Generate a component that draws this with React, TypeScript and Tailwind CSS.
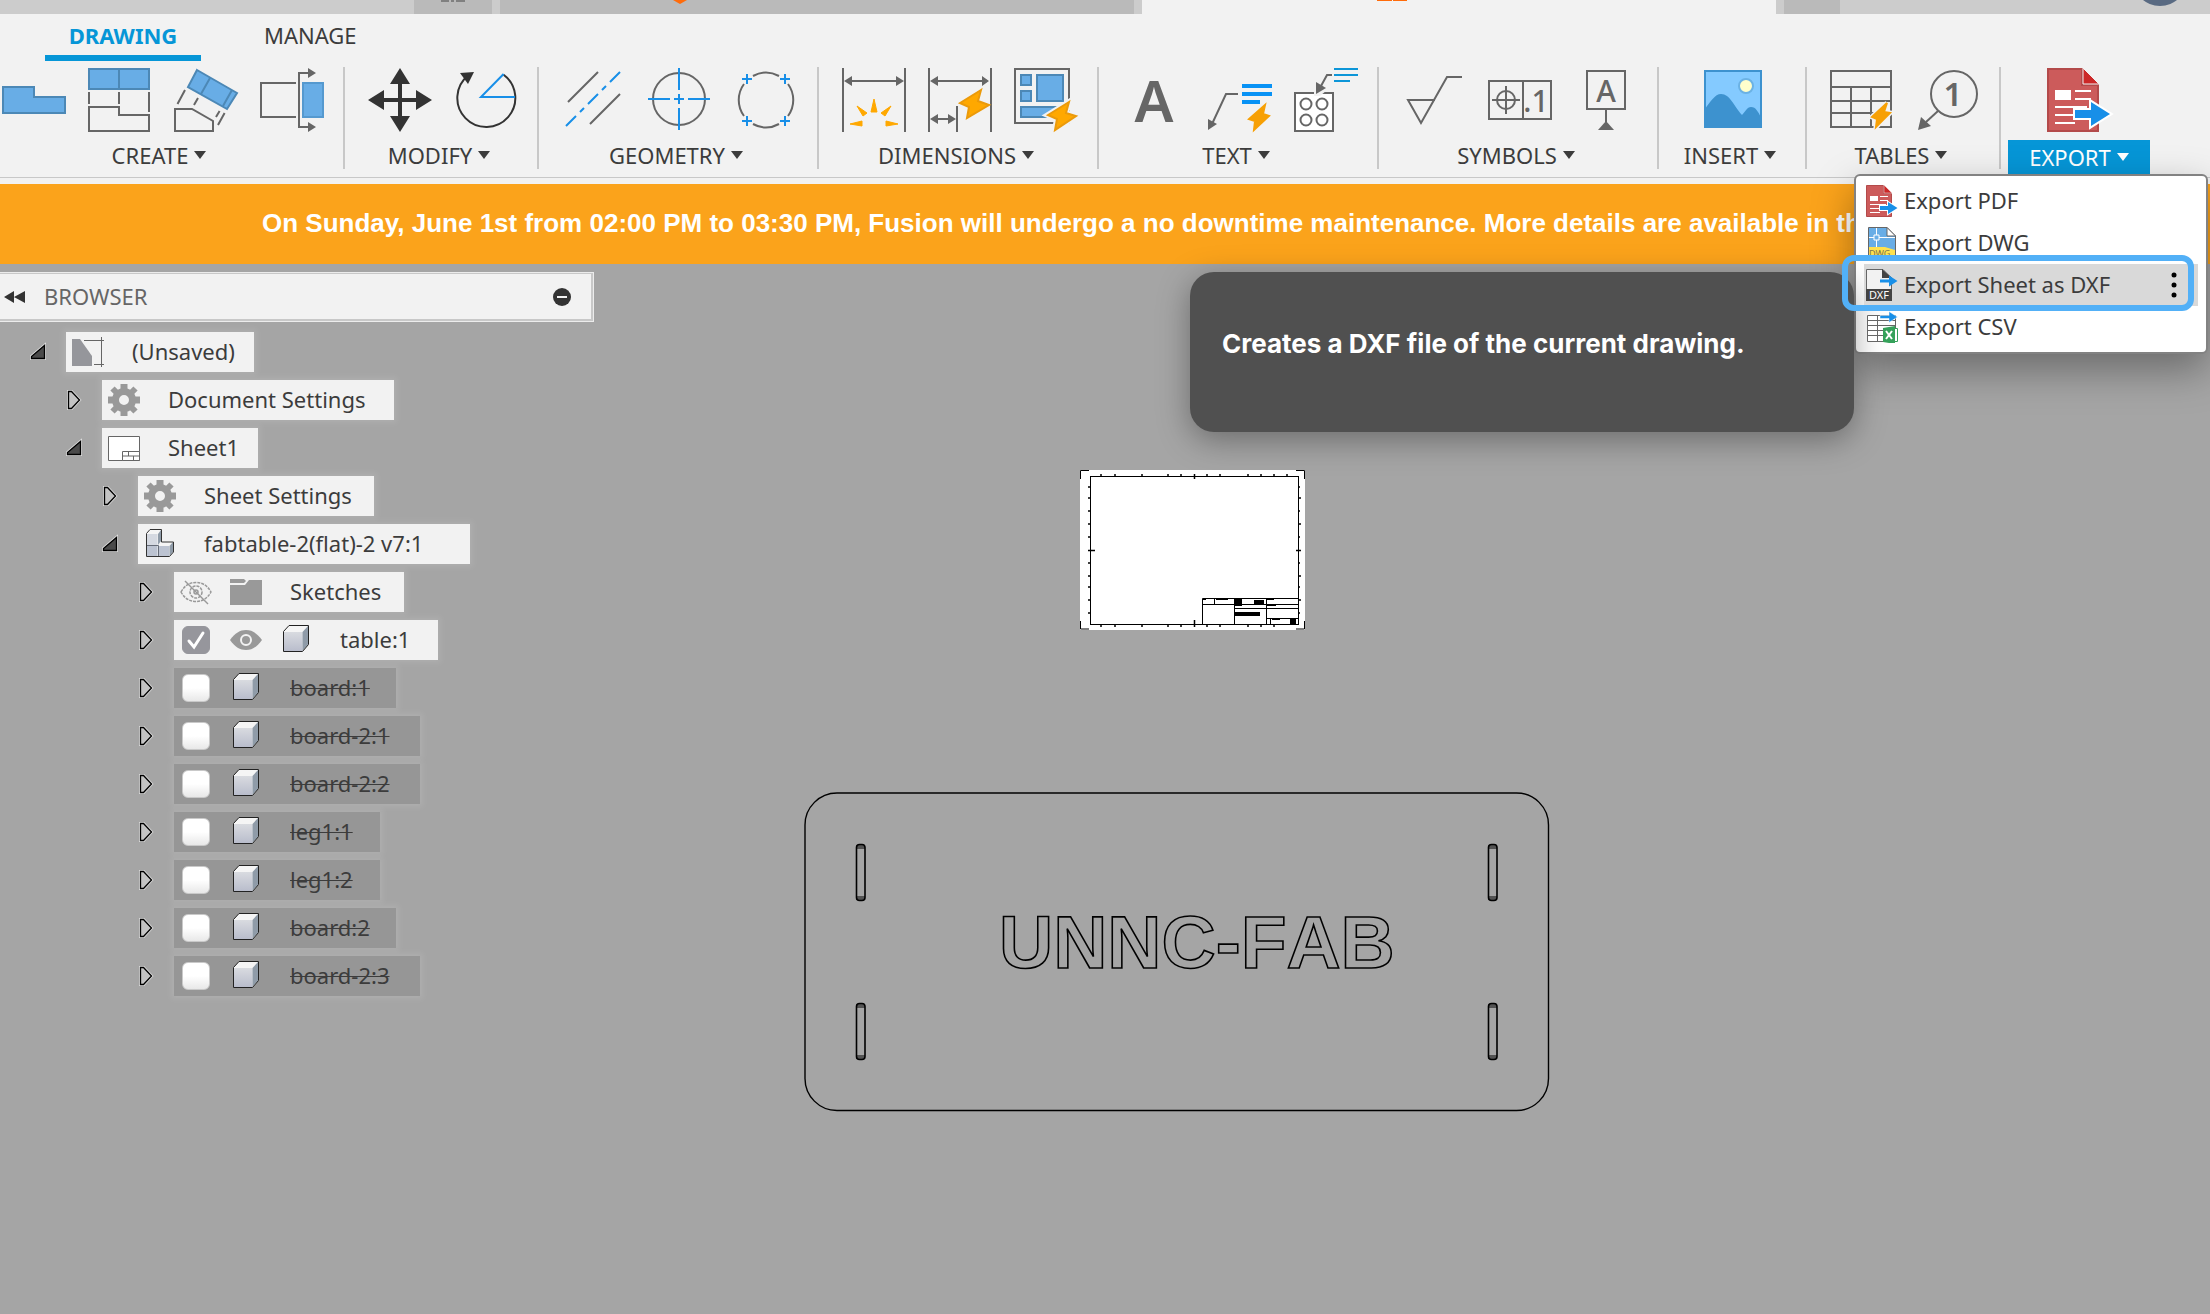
import React, { useState } from 'react';

const SANS = "font-['Noto_Sans','Open_Sans',sans-serif]";

interface IconProps {
  className?: string;
}

/* ---------- Toolbar icons, all drawn on a 64px grid ---------- */

const Glyph: React.FC<{ children: React.ReactNode; className?: string }> = ({ children, className }) => (
  <svg
    viewBox="0 0 64 64"
    className={className ?? 'w-16 h-16 block overflow-visible'}
    fill="none"
    stroke="#666666"
    strokeWidth="2"
    aria-hidden="true"
  >
    {children}
  </svg>
);

const BaseViewIcon = () => (
  <Glyph>
    <path d="M1 19H32V29H63V45H1Z" fill="#68ade6" stroke="#4c88b6" />
  </Glyph>
);

const ProjectedViewIcon = () => (
  <Glyph>
    <path d="M1 1H61V21H1ZM31 1V21" fill="#68ade6" stroke="#4c88b6" />
    <path d="M1 24V36M31 24V36M61 24V44M1 39H31V47H61V63H1Z" />
  </Glyph>
);

const AuxiliaryViewIcon = () => (
  <Glyph>
    <path d="M23 2L63 25L53 41L14 19Z" fill="#68ade6" stroke="#4c88b6" />
    <path d="M36 10L27 26M58 22L49 38" stroke="#4c88b6" />
    <path d="M11 22L3.500 36M24 30L20 37M45.600 43L42 49M50.600 45L44 57M1 41H18L39 53V63H1Z" />
  </Glyph>
);

const SectionViewIcon = () => (
  <Glyph>
    <path d="M36 15H1V49H36M48 5H39V59H48" />
    <path d="M48 0L56 5L48 10ZM48 54L56 59L48 64Z" fill="#666666" stroke="none" />
    <rect x="43" y="15" width="20" height="34" fill="#68ade6" stroke="#5599cf" />
  </Glyph>
);

const MoveIcon = () => (
  <Glyph>
    <path d="M32 10V54M10 32H54" stroke="#333333" strokeWidth="4" />
    <path
      d="M32 0L42 16H22ZM32 64L42 48H22ZM0 32L16 22V42ZM64 32L48 22V42Z"
      fill="#333333"
      stroke="none"
    />
  </Glyph>
);

const RotateIcon = () => (
  <Glyph>
    <path d="M14 7.500A29 29 0 1 0 49.600 6.700" stroke="#333333" />
    <path d="M6 5L20 4L14 16Z" fill="#333333" stroke="none" />
    <path d="M49.600 6L27 29H61" stroke="#188fe8" />
  </Glyph>
);

const CenterlineIcon = () => (
  <Glyph>
    <path d="M36 4L6 34M58 26L28 56" />
    <path d="M58 4L48 14M44 18L40 22M36 26L26 36M22 40L18 44M14 48L4 58" stroke="#188fe8" />
  </Glyph>
);

const CenterMarkIcon = () => (
  <Glyph>
    <circle cx="31" cy="31" r="26" />
    <path d="M31 0V22M31 40V62M0 31H22M40 31H62M31 26V36M26 31H36" stroke="#188fe8" />
  </Glyph>
);

const CenterMarkPatternIcon = () => (
  <Glyph>
    <path d="M19 8A27 27 0 0 1 45 8M54 16A27 27 0 0 1 54 48M45 56A27 27 0 0 1 19 56M10 48A27 27 0 0 1 10 16" />
    <path
      d="M13 6V16M8 11H18M51 6V16M46 11H56M13 48V58M8 53H18M51 48V58M46 53H56"
      stroke="#188fe8"
    />
  </Glyph>
);

const DimensionIcon = () => (
  <Glyph>
    <path d="M1 0V64M63 0V64M6 13H58" />
    <path d="M2 13L10 8V18ZM62 13L54 8V18Z" fill="#666666" stroke="none" />
    <path
      d="M32 31L35 44H29ZM15 38L25 45L21 48ZM49 38L39 45L43 48ZM8 56L20 53V58ZM56 56L44 53V58Z"
      fill="#ffa800"
      stroke="#ffa800"
      strokeWidth="1"
    />
  </Glyph>
);

const AutoDimensionIcon = () => (
  <Glyph>
    <path d="M1 0V64M63 0V64M29 38V64M8 13H56M8 51H22" />
    <path d="M2 13L10 8V18ZM61 13L54 8V18ZM2 51L10 46V56ZM28 51L20 46V56Z" fill="#666666" stroke="none" />
    <path d="M53 22L32 35L41 39L39 50L61 37L50 33Z" fill="#ffa800" stroke="#eb9a0a" />
  </Glyph>
);

const DimensionSettingsIcon = () => (
  <Glyph>
    <path d="M1 1H55V55H1Z" />
    <path d="M7 7H17V17H7ZM7 23H17V33H7ZM23 7H49V33H23ZM7 39H45V49H7Z" fill="#68ade6" stroke="#4c88b6" />
    <path d="M55 34L34 47L43 51L41 62L62 48L52 45Z" fill="#f2f2f2" stroke="#f2f2f2" strokeWidth="6" />
    <path d="M55 34L34 47L43 51L41 62L62 48L52 45Z" fill="#ffa800" stroke="#eb9a0a" />
  </Glyph>
);

const TextIcon = () => (
  <Glyph>
    <text x="32" y="54" textAnchor="middle" fontSize="58" fontWeight="600" fill="#666666" stroke="none">
      A
    </text>
  </Glyph>
);

const LeaderIcon = () => (
  <Glyph>
    <path d="M30 26H18L4 56" />
    <path d="M0 51L9 56L0 62Z" fill="#666666" stroke="none" />
    <path d="M34 18H64M34 26H64M34 34H52" stroke="#0892f5" strokeWidth="4" />
    <path d="M57 37L41 51L47 53L46 62L61 48L55 46Z" fill="#f7a005" stroke="#f7a005" />
  </Glyph>
);

const HoleNoteIcon = () => (
  <Glyph>
    <path d="M1 25H39V63H1Z" fill="#ffffff" />
    <circle cx="12" cy="36" r="5.500" />
    <circle cx="28" cy="36" r="5.500" />
    <circle cx="12" cy="52" r="5.500" />
    <circle cx="28" cy="52" r="5.500" />
    <path d="M20 12V28H26L33 22Z" fill="#f2f2f2" stroke="none" />
    <path d="M38 7H33L27 18" />
    <path d="M22 14L32 20L22 26Z" fill="#666666" stroke="none" />
    <path d="M40 1H64M40 7H64M40 13H56" stroke="#0d96d8" />
  </Glyph>
);

const SurfaceTextureIcon = () => (
  <Glyph>
    <path d="M60 9H45L19 55L6 32H33" />
  </Glyph>
);

const FeatureControlIcon = () => (
  <Glyph>
    <path d="M1 13H63V51H1ZM35 13V51M4 32H32M18 18V46" />
    <circle cx="18" cy="32" r="9" />
    <text x="48" y="44" textAnchor="middle" fontSize="30" fontWeight="500" fill="#666666" stroke="none">
      .1
    </text>
  </Glyph>
);

const DatumIcon = () => (
  <Glyph>
    <path d="M13 3H51V41H13ZM32 41V54" />
    <path d="M32 53L40 62H24Z" fill="#666666" stroke="none" />
    <text x="32" y="34" textAnchor="middle" fontSize="30" fontWeight="500" fill="#666666" stroke="none">
      A
    </text>
  </Glyph>
);

const ImageIcon = () => (
  <Glyph>
    <path d="M3 3H59V59H3Z" fill="#84caff" stroke="#3d92cf" />
    <path
      d="M3 41C8 34 13 26 19 26C28 26 32 38 40 47C43 44 45 39 49 39C54 39 56 44 59 49V59H3Z"
      fill="#3d92cf"
      stroke="none"
    />
    <circle cx="44" cy="18" r="7" fill="#ffffcc" stroke="#6bb2e4" />
  </Glyph>
);

const TableIcon = () => (
  <Glyph>
    <path d="M1 3H61V59H1ZM1 19H61M1 33H61M1 45H61M21 19V59M41 19V59" />
    <path d="M57 35L42 49L47 51L46 59L60 45L54 44Z" fill="#f7a005" stroke="#f2f2f2" strokeWidth="5" />
    <path d="M57 35L42 49L47 51L46 59L60 45L54 44Z" fill="#f7a005" stroke="#f7a005" />
  </Glyph>
);

const BalloonIcon = () => (
  <Glyph>
    <circle cx="38" cy="26" r="23" />
    <path d="M22 43L10 54" />
    <path d="M2 62L5 49L15 58Z" fill="#666666" stroke="none" />
    <text x="37" y="38" textAnchor="middle" fontSize="33" fontWeight="600" fill="#666666" stroke="none">
      1
    </text>
  </Glyph>
);

const PdfIcon: React.FC<IconProps> = ({ className }) => (
  <Glyph className={className}>
    <path d="M1 1H35V17H51V63H1Z" fill="#cc5b5b" stroke="#b34a4a" />
    <path d="M36 0L52 16H36Z" fill="#cc2828" stroke="#f2f2f2" strokeWidth="1" />
    <path d="M8 22H24V32H8Z" fill="#ffffff" stroke="none" />
    <path d="M28 23H44M28 31H44M8 39H40M8 47H28M8 55H28" stroke="#ffffff" />
    <path d="M28 42H44V34L63 46L44 58V50H28Z" fill="#188fe8" stroke="#ffffff" strokeWidth="4" />
    <path d="M28 42H44V34L63 46L44 58V50H28Z" fill="#188fe8" stroke="none" />
  </Glyph>
);

/* ---------- Menu icons, 32px grid ---------- */

const DwgIcon = () => (
  <svg viewBox="0 0 32 32" className="w-8 h-8" aria-hidden="true">
    <path d="M2.500.500H21L29.500 9V31.500H2.500Z" fill="#68ade6" stroke="#666666" />
    <path d="M21 .500V9H29.500Z" fill="#ffffff" stroke="#666666" />
    <path d="M3 20H19L29 23V31H3Z" fill="#ffe14d" />
    <path d="M10.500 1V8M10.500 13V20M3 10.500H8M13 10.500H29M8 8H13V13H8Z" fill="none" stroke="#ffffff" />
    <text x="3" y="30" fontSize="9" fill="#7a7350">
      DWG
    </text>
  </svg>
);

const DxfIcon = () => (
  <svg viewBox="0 0 32 32" className="w-8 h-8" aria-hidden="true">
    <path d="M.500.500H17L25.500 9V31.500H.500Z" fill="#f2f2f2" stroke="#666666" />
    <path d="M16 0L26 9H16Z" fill="#434343" />
    <path d="M14 10.500H23V6.500L31.500 12L23 17.500V13.500H14Z" fill="#188fe8" />
    <path d="M0 20H26V32H0Z" fill="#434343" />
    <text x="13" y="30" textAnchor="middle" fontSize="11" fill="#ffffff">
      DXF
    </text>
  </svg>
);

const CsvIcon = () => (
  <svg viewBox="0 0 32 32" className="w-8 h-8" aria-hidden="true">
    <path
      d="M1.500 4.500H29.500V30.500H1.500ZM1.500 9.500H29.500M1.500 14.500H29.500M1.500 19.500H29.500M1.500 24.500H29.500M11.500 4.500V30.500"
      fill="#ffffff"
      stroke="#666666"
    />
    <path d="M14 4.500H23V.500L31.500 6L23 11.500V7.500H14Z" fill="#188fe8" stroke="#ffffff" strokeWidth=".500" />
    <path d="M17 17L29 15V33L17 31Z" fill="#35a15a" />
    <path d="M29 17.500H31.500V30.500H29" fill="#ffffff" stroke="#35a15a" />
    <path d="M20 20L26 28M26 20L20 28" stroke="#ffffff" strokeWidth="2" />
  </svg>
);

/* ---------- Browser tree icons ---------- */

const DocumentIcon = () => (
  <svg viewBox="0 0 32 32" className="w-8 h-8" aria-hidden="true">
    <path d="M0 3H8L20 20V30H0Z" fill="#95969b" />
    <path d="M12 4.500H32M22 28.500H32M29.500 1V31" stroke="#666666" fill="none" />
  </svg>
);

const GearIcon = () => (
  <svg viewBox="0 0 32 32" className="w-8 h-8" aria-hidden="true">
    <g fill="none" stroke="#999999">
      <circle cx="16" cy="16" r="8.500" strokeWidth="7" />
      <path d="M16 0V6M16 26V32M0 16H6M26 16H32" strokeWidth="7" />
      <path d="M4.500 4.500L9 9M23 23L27.500 27.500M4.500 27.500L9 23M23 9L27.500 4.500" strokeWidth="6" />
    </g>
  </svg>
);

const SheetIcon = () => (
  <svg viewBox="0 0 32 32" className="w-8 h-8" aria-hidden="true" fill="#ffffff" stroke="#666666">
    <path d="M.500 4.500H31.500V28.500H.500Z" />
    <path d="M14.500 19.500H31.500V28.500H14.500ZM14.500 24H31.500M20.500 19.500V24M25.500 24V28.500" />
  </svg>
);

const CubeIcon = () => (
  <svg viewBox="0 0 32 32" className="w-8 h-8" aria-hidden="true">
    <defs>
      <linearGradient id="cube-front" x1="0" y1="0" x2="0" y2="1">
        <stop offset="0" stopColor="#d9dbe0" />
        <stop offset="1" stopColor="#b9bdcc" />
      </linearGradient>
    </defs>
    <path d="M3.500 7.500L9 1.500H28.500V20.500L22.500 27.500H3.500Z" fill="#f5f5f5" />
    <path d="M4 8H22.500V27H4Z" fill="url(#cube-front)" />
    <path d="M22.500 8L28 2V20.500L22.500 27Z" fill="#8f9ba8" />
    <path d="M3.500 7.500L9 1.500H28.500V20.500L22.500 27.500H3.500Z" fill="none" stroke="#222222" />
  </svg>
);

const ComponentIcon = () => (
  <svg viewBox="0 0 32 32" className="w-8 h-8" aria-hidden="true">
    <path d="M2.500 5.500L6 1.500H17.500V14L20 13.500H29.500V24L25.500 28.500H2.500Z" fill="#f5f5f5" />
    <path d="M3 6H13.500V17H3Z" fill="#d5d9e1" />
    <path d="M3 18H13.500V28H3ZM15 18H25V28H15Z" fill="#bcc3d1" />
    <path d="M14 6L17 2V13L14 17ZM25.500 18L29 14V24L25.500 28Z" fill="#8f9ba8" />
    <path d="M2.500 17.500H14.500V28.500" fill="none" stroke="#666c78" />
    <path
      d="M2.500 5.500L6 1.500H17.500V14H29.500V24L25.500 28.500H2.500Z"
      fill="none"
      stroke="#333333"
    />
  </svg>
);

const EyeIcon = () => (
  <svg viewBox="0 0 32 32" className="w-8 h-8" aria-hidden="true">
    <path d="M0 16C5 9 10 6 16 6S27 9 32 16C27 23 22 26 16 26S5 23 0 16Z" fill="#999999" />
    <circle cx="16" cy="16" r="5" fill="#999999" stroke="#f2f2f2" strokeWidth="2" />
  </svg>
);

const EyeOffIcon = () => (
  <svg viewBox="0 0 32 32" className="w-8 h-8" aria-hidden="true" fill="none" stroke="#999999" strokeWidth="1.500">
    <path d="M1 16C5 9 10 6.500 16 6.500S27 9 31 16C27 23 22 25.500 16 25.500S5 23 1 16Z" strokeDasharray="3 1" />
    <circle cx="16" cy="16" r="6" strokeDasharray="3 1" />
    <circle cx="16" cy="16" r="2" />
    <path d="M5 5L28 28" />
  </svg>
);

const FolderIcon = () => (
  <svg viewBox="0 0 32 32" className="w-8 h-8" aria-hidden="true" fill="#999999">
    <path d="M0 3H14L16 5L14 7H0ZM0 9H15L19 4H32V29H0Z" />
  </svg>
);

/* ---------- Ribbon ---------- */

interface ToolGroup {
  label: string;
  tools: { name: string; icon: React.ReactNode }[];
}

const toolGroups: ToolGroup[] = [
  {
    label: 'CREATE',
    tools: [
      { name: 'Base View', icon: <BaseViewIcon /> },
      { name: 'Projected View', icon: <ProjectedViewIcon /> },
      { name: 'Auxiliary View', icon: <AuxiliaryViewIcon /> },
      { name: 'Section View', icon: <SectionViewIcon /> },
    ],
  },
  {
    label: 'MODIFY',
    tools: [
      { name: 'Move', icon: <MoveIcon /> },
      { name: 'Rotate', icon: <RotateIcon /> },
    ],
  },
  {
    label: 'GEOMETRY',
    tools: [
      { name: 'Centerline', icon: <CenterlineIcon /> },
      { name: 'Center Mark', icon: <CenterMarkIcon /> },
      { name: 'Center Mark Pattern', icon: <CenterMarkPatternIcon /> },
    ],
  },
  {
    label: 'DIMENSIONS',
    tools: [
      { name: 'Dimension', icon: <DimensionIcon /> },
      { name: 'Auto Dimension', icon: <AutoDimensionIcon /> },
      { name: 'Dimension Settings', icon: <DimensionSettingsIcon /> },
    ],
  },
  {
    label: 'TEXT',
    tools: [
      { name: 'Text', icon: <TextIcon /> },
      { name: 'Leader', icon: <LeaderIcon /> },
      { name: 'Hole and Thread Note', icon: <HoleNoteIcon /> },
    ],
  },
  {
    label: 'SYMBOLS',
    tools: [
      { name: 'Surface Texture', icon: <SurfaceTextureIcon /> },
      { name: 'Feature Control Frame', icon: <FeatureControlIcon /> },
      { name: 'Datum Identifier', icon: <DatumIcon /> },
    ],
  },
  {
    label: 'INSERT',
    tools: [{ name: 'Insert Image', icon: <ImageIcon /> }],
  },
  {
    label: 'TABLES',
    tools: [
      { name: 'Table', icon: <TableIcon /> },
      { name: 'Balloon', icon: <BalloonIcon /> },
    ],
  },
];

const Caret = () => (
  <svg viewBox="0 0 12 8" className="w-3 h-2" fill="currentColor" aria-hidden="true">
    <path d="M0 0H12L6 8Z" />
  </svg>
);

const RibbonGroup: React.FC<{ group: ToolGroup }> = ({ group }) => (
  <div className="flex flex-none flex-col items-center border-r-2 border-[#c8c8c8] h-[102px] pt-px pl-3 pr-2">
    <div className={`flex ${group.tools.length === 1 ? 'px-5' : ''}`}>
      {group.tools.map((tool) => (
        <button key={tool.name} type="button" aria-label={tool.name} className="w-[86px] flex justify-center">
          {tool.icon}
        </button>
      ))}
    </div>
    <button
      type="button"
      className="flex items-center gap-1.5 h-9 mt-2 mr-2 text-[22px] leading-none text-[#3c3c3c]"
    >
      {group.label}
      <Caret />
    </button>
  </div>
);

const exportItems = [
  { label: 'Export PDF', icon: <PdfIcon className="w-8 h-8" /> },
  { label: 'Export DWG', icon: <DwgIcon /> },
  { label: 'Export Sheet as DXF', icon: <DxfIcon />, active: true },
  { label: 'Export CSV', icon: <CsvIcon /> },
];

const ExportMenu = () => (
  <div className="absolute z-20 top-[107px] right-0 w-[354px] rounded-md border-2 border-[#828282] bg-white py-1 px-2 shadow-[0_16px_40px_rgba(0,0,0,0.35)]">
    {/* Tooltip for the hovered entry */}
    <div
      role="tooltip"
      className="absolute -z-10 right-[352px] top-24 w-[664px] h-40 rounded-3xl bg-[#505050] px-8 pt-14 shadow-[0_8px_32px_rgba(0,0,0,0.35)] font-['Inter',sans-serif] text-[26px] leading-8 font-bold text-white"
    >
      Creates a DXF file of the current drawing.
    </div>
    <ul role="menu">
      {exportItems.map((item) => (
        <li key={item.label} role="none" className="relative">
          <button
            type="button"
            role="menuitem"
            className={`flex items-center w-full h-[42px] pl-0.5 gap-1.5 text-[22px] leading-8 text-[#3c3c3c] ${
              item.active ? 'bg-[#d9d9d9]' : ''
            }`}
          >
            {item.icon}
            <span className="pb-0.5">{item.label}</span>
            {item.active && (
              <svg viewBox="0 0 6 26" className="ml-auto mr-[21px] w-1.5 h-[26px]" aria-hidden="true">
                <circle cx="3" cy="3" r="2.500" />
                <circle cx="3" cy="13" r="2.500" />
                <circle cx="3" cy="23" r="2.500" />
              </svg>
            )}
          </button>
          {item.active && (
            <div className="absolute -top-[9px] -bottom-[5px] -left-[22px] right-1 rounded-xl border-[6px] border-[#52b0f7] pointer-events-none" />
          )}
        </li>
      ))}
    </ul>
  </div>
);

const Ribbon = () => (
  <header className="relative bg-[#f2f2f2] h-[170px]">
    <nav className="flex pl-[45px] h-[47px] text-[22px] leading-6">
      <button type="button" className="w-[156px] h-full border-b-[6px] border-[#0696d7] font-bold text-[#0696d7]">
        DRAWING
      </button>
      <button type="button" className="ml-[63px] h-full pb-1.5 text-[#3c3c3c]">
        MANAGE
      </button>
    </nav>
    <div className="flex -ml-[21px] pt-1.5 pb-2 border-b border-[#c8c8c8]">
      {toolGroups.map((group) => (
        <RibbonGroup key={group.label} group={group} />
      ))}
      <div className="relative flex flex-none w-[207px] flex-col pt-px pl-[7px] h-[102px]">
        <button type="button" aria-label="Export PDF" className="w-[142px] flex justify-center">
          <PdfIcon />
        </button>
        <button
          type="button"
          aria-haspopup="menu"
          className="flex flex-none items-center justify-center gap-1.5 w-[142px] h-[35px] mt-2 pb-0.5 bg-[#0696d7] text-[22px] leading-none text-white"
        >
          EXPORT
          <Caret />
        </button>
        <ExportMenu />
      </div>
    </div>
  </header>
);

/* ---------- Browser panel ---------- */

interface TreeNode {
  label: string;
  level: 0 | 1 | 2 | 3;
  width: string;
  open?: boolean;
  icons: React.ReactNode[];
  check?: boolean;
  hidden?: boolean;
}

const body = (label: string, width: string): TreeNode => ({
  label,
  width,
  level: 3,
  check: false,
  hidden: true,
  icons: [<CubeIcon />],
});

const treeNodes: TreeNode[] = [
  { label: '(Unsaved)', level: 0, width: 'w-[188px]', open: true, icons: [<DocumentIcon />] },
  { label: 'Document Settings', level: 1, width: 'w-[292px]', icons: [<GearIcon />] },
  { label: 'Sheet1', level: 1, width: 'w-[156px]', open: true, icons: [<SheetIcon />] },
  { label: 'Sheet Settings', level: 2, width: 'w-[236px]', icons: [<GearIcon />] },
  { label: 'fabtable-2(flat)-2 v7:1', level: 2, width: 'w-[332px]', open: true, icons: [<ComponentIcon />] },
  { label: 'Sketches', level: 3, width: 'w-[230px]', icons: [<EyeOffIcon />, <FolderIcon />] },
  { label: 'table:1', level: 3, width: 'w-[264px]', check: true, icons: [<EyeIcon />, <CubeIcon />] },
  body('board:1', 'w-[222px]'),
  body('board-2:1', 'w-[246px]'),
  body('board-2:2', 'w-[246px]'),
  body('leg1:1', 'w-[206px]'),
  body('leg1:2', 'w-[206px]'),
  body('board:2', 'w-[222px]'),
  body('board-2:3', 'w-[246px]'),
];

const indent = ['pl-[30px]', 'pl-[66px]', 'pl-[102px]', 'pl-[138px]'];

const Expander: React.FC<{ open?: boolean }> = ({ open }) => (
  <button type="button" aria-label={open ? 'Collapse' : 'Expand'} className="flex-none w-9">
    <svg viewBox="0 0 18 20" className="w-[18px] h-5" aria-hidden="true">
      <path
        d={open ? 'M14.500 3.500V16.500H1.500V14.500Z' : 'M2.500 1.500H5.500L13.500 10L5.500 18.500H2.500Z'}
        fill={open ? '#3c3c3c' : '#c4c4c4'}
        stroke="#dddddd"
        strokeWidth="3"
      />
      <path
        d={open ? 'M14.500 3.500V16.500H1.500V14.500Z' : 'M2.500 1.500H5.500L13.500 10L5.500 18.500H2.500Z'}
        fill={open ? '#4a4a4a' : '#c4c4c4'}
        stroke="#000000"
        strokeWidth="1.300"
      />
    </svg>
  </button>
);

const TreeRow: React.FC<{ node: TreeNode }> = ({ node }) => {
  const [checked, setChecked] = useState(!!node.check);
  const hasCheck = node.check !== undefined;

  return (
    <li className={`flex items-center h-10 ${indent[node.level]}`}>
      <Expander open={node.open} />
      <label
        className={`flex items-center h-10 pl-1.5 gap-[18px] whitespace-nowrap text-[22px] leading-8 text-[#3c3c3c] shadow-[0_0_6px_3px_rgba(255,255,255,0.1)] ${
          node.width
        } ${node.hidden ? 'bg-[#969696]' : 'bg-[#f2f2f2]'}`}
      >
        {hasCheck && (
          <span className="grid flex-none w-8 h-8 place-items-center">
            <input
              type="checkbox"
              checked={checked}
              onChange={(e) => setChecked(e.target.checked)}
              className="col-start-1 row-start-1 appearance-none w-7 h-7 rounded-md border border-[#c9c9c9] bg-linear-to-b from-white from-50% to-[#e8e8e8] checked:border-[#96969c] checked:bg-none checked:bg-[#96969c]"
            />
            {checked && (
              <svg viewBox="0 0 28 28" className="col-start-1 row-start-1 w-7 h-7 pointer-events-none" aria-hidden="true">
                <path d="M7 15L12 21L21 7" fill="none" stroke="#ffffff" strokeWidth="3" strokeLinecap="round" />
              </svg>
            )}
          </span>
        )}
        {node.icons.map((icon, i) => (
          <span key={i} className="flex-none">
            {icon}
          </span>
        ))}
        <span className={`pl-2.5 pb-0.5 ${node.hidden ? 'line-through decoration-1' : ''}`}>{node.label}</span>
      </label>
    </li>
  );
};

const BrowserPanel = () => (
  <aside className="relative w-[594px] pt-2">
    <div className="flex items-center h-[50px] pl-1 pr-[21px] border-y border-r border-[#ececec] bg-[#f2f2f2] shadow-[inset_-2px_-2px_0_#c8c8c8,inset_0_1px_0_#c8c8c8]">
      <button type="button" aria-label="Collapse browser" className="flex-none">
        <svg viewBox="0 0 22 12" className="w-[22px] h-3" fill="#333333" aria-hidden="true">
          <path d="M0 6L10 0V12ZM10 6L21 0V12Z" />
        </svg>
      </button>
      <h2 className="ml-[18px] pb-0.5 text-[22px] leading-6 text-[#666666]">BROWSER</h2>
      <button type="button" aria-label="Minimize" className="ml-auto">
        <svg viewBox="0 0 20 20" className="w-5 h-5" aria-hidden="true">
          <circle cx="10" cy="10" r="9" fill="#333333" />
          <path d="M5 10H15" stroke="#f2f2f2" strokeWidth="2" />
        </svg>
      </button>
    </div>
    <ul className="flex flex-col gap-2 pt-2.5">
      {treeNodes.map((node) => (
        <TreeRow key={node.label} node={node} />
      ))}
    </ul>
  </aside>
);

/* ---------- Drawing canvas ---------- */

const SheetPreview = () => (
  <svg viewBox="0 0 225 160" className="absolute left-[1080px] top-[206px] w-[225px] h-40" fill="none" stroke="#000000">
    <rect width="225" height="160" fill="#ffffff" stroke="none" />
    <path d="M.500 9V.500H9M216 .500H224.500V9M224.500 151V159H216M9 159H.500V151" />
    <rect x="10.500" y="6.500" width="208" height="148" />
    <path
      strokeWidth="1.500"
      d="M21 4V7M35 4V7M62 4V7M88 4V7M101 4V7M127 4V7M140 4V7M168 4V7M181 4V7M194 4V7M207 4V7M114.500 4V9M21 155V157M35 155V157M62 155V157M88 155V157M101 155V157M127 155V157M140 155V157M168 155V157M181 155V157M194 155V157M114.500 150V157"
    />
    <path
      strokeWidth="1.500"
      d="M8 17H11M8 28H11M8 41H11M8 54H11M8 67H11M8 80.500H15M8 93H11M8 106H11M8 117H11M8 130H11M8 143H11M218 17H220M218 28H221M218 41H220M218 54H221M218 67H220M216 80.500H221M218 93H220M218 106H221M218 117H220M218 130H221M218 143H220"
    />
    <path d="M122.500 154V128.500H218M122.500 134.500H218M134.500 128V134M154.500 128V154M154.500 138.500H218M186.500 128V154M186.500 148.500H218M190.500 149V154M210.500 149V154" />
    <path
      d="M155 128H162V136H155ZM174 130H184V134H174ZM155 142H180V146H155ZM187 134H196V136H187ZM211 149H216V154H211ZM136 128H148V130H136ZM123 128H126V130H123ZM187 128H194V130H187ZM192 148H200V150H192Z"
      fill="#000000"
      stroke="none"
    />
  </svg>
);

const slots = [
  [52, 52],
  [52, 211],
  [684, 52],
  [684, 211],
];

const FlatPattern = () => (
  <svg viewBox="0 0 746 320" className="absolute left-[804px] top-[528px] w-[746px] h-80" fill="none" stroke="#000000">
    <rect x="1" y="1" width="743.500" height="317.500" rx="32" strokeWidth="1.400" />
    {slots.map(([x, y]) => (
      <g key={`${x}-${y}`}>
        <rect x={x + 0.5} y={y + 0.5} width="8.500" height="56" rx="3" strokeWidth="1.600" />
        <path
          d={`M${x + 0.5} ${y + 3}H${x + 9}M${x + 0.5} ${y + 54}H${x + 9}`}
          strokeWidth="4"
          strokeDasharray="1 1"
        />
      </g>
    ))}
    <text
      x="195"
      y="176"
      fontSize="75"
      fontWeight="700"
      strokeWidth="1.600"
      className="font-['Liberation_Sans',Arial,sans-serif] [font-kerning:none]"
    >
      UNNC-FAB
    </text>
  </svg>
);

/* ---------- Document tabs above the ribbon ---------- */

const TabStrip = () => (
  <div className="flex h-3.5 overflow-hidden bg-[#cccccc] pl-[414px] gap-2">
    <div className="flex-none w-[78px] bg-[#bababa] flex justify-center">
      <svg viewBox="0 0 24 14" className="w-6 h-3.5" fill="#808080" aria-hidden="true">
        <path d="M0 0H8V2H0ZM10 0H13V2H10ZM15 0H24V2H15Z" />
      </svg>
    </div>
    <div className="flex-none w-[634px] bg-[#bababa] pl-[173px]">
      <svg viewBox="0 0 14 14" className="w-3.5 h-3.5" aria-hidden="true">
        <path d="M0 0H14L7 4Z" fill="#ff6b0a" />
      </svg>
    </div>
    <div className="flex-none w-[634px] bg-[#f2f2f2] pl-[235px]">
      <svg viewBox="0 0 30 14" className="w-[30px] h-3.5" aria-hidden="true">
        <path d="M0 0H15V1H0ZM16 0H30V1H16Z" fill="#ff6b0a" />
      </svg>
    </div>
    <div className="flex-none w-14 bg-[#bababa]" />
    <svg viewBox="0 0 54 14" className="ml-auto mr-[23px] flex-none w-[54px] h-3.5" aria-hidden="true">
      <circle cx="27" cy="-21" r="27" fill="#596a82" />
    </svg>
  </div>
);

export default function App() {
  return (
    <div className={`flex flex-col min-h-screen overflow-hidden bg-[#a5a5a5] ${SANS}`}>
      <TabStrip />
      <div className="relative z-10">
        <Ribbon />
      </div>
      <div
        role="status"
        className="flex items-center h-20 pl-[262px] pb-0.5 overflow-hidden whitespace-nowrap bg-[#fba31b] font-['Liberation_Sans',Arial,sans-serif] text-[26px] font-bold text-white"
      >
        On Sunday, June 1st from 02:00 PM to 03:30 PM, Fusion will undergo a no downtime maintenance. More details are
        available in th
      </div>
      <main className="relative flex-1">
        <SheetPreview />
        <FlatPattern />
        <BrowserPanel />
      </main>
    </div>
  );
}
